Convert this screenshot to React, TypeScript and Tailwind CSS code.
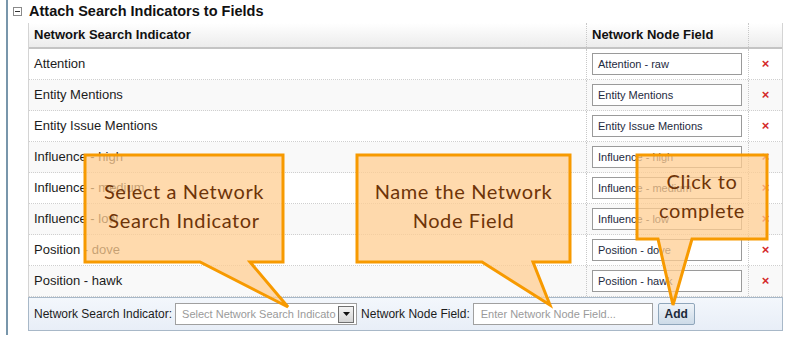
const ROWS = [
  ['Attention', 'Attention - raw'],
  ['Entity Mentions', 'Entity Mentions'],
  ['Entity Issue Mentions', 'Entity Issue Mentions'],
  ['Influence - high', 'Influence - high'],
  ['Influence - medium', 'Influence - medium'],
  ['Influence - low', 'Influence - low'],
  ['Position - dove', 'Position - dove'],
  ['Position - hawk', 'Position - hawk'],
]

const CALLOUTS = [
  { d: 'M85,155 H283 V262 H250 L288,307 L200,262 H85 Z', lines: ['Select a Network', 'Search Indicator'], box: 'left-[85px] top-[177px] w-[198px]' },
  { d: 'M357,155 H570 V262 H533 L550,305 L482,262 H357 Z', lines: ['Name the Network', 'Node Field'], box: 'left-[357px] top-[177px] w-[213px]' },
  { d: 'M637,155 H767 V239 H692 L673,305 L658,239 H637 Z', lines: ['Click to', 'complete'], box: 'left-[637px] top-[167px] w-[130px]' },
]

function Callouts() {
  return (
    <>
      <svg className="pointer-events-none absolute left-0 top-0" width="785" height="341">
        {CALLOUTS.map((c, i) => (
          <path key={i} d={c.d} fill="rgba(255,205,145,0.74)" stroke="#f79a00" strokeWidth="3" strokeLinejoin="miter" />
        ))}
      </svg>
      {CALLOUTS.map((c, i) => (
        <div
          key={i}
          className={`absolute ${c.box} text-center text-[20px] leading-[29px] tracking-[0.6px] text-[#6e3408] [font-family:Lato,'Open_Sans',sans-serif]`}
        >
          {c.lines.map(l => <div key={l}>{l}</div>)}
        </div>
      ))}
    </>
  )
}

export default function App() {
  return (
    <div className="relative h-[341px] w-[785px] overflow-hidden bg-white text-[#1c1c1c] [font-family:'Liberation_Sans',Arial,sans-serif]">
      <div className="ml-[6px] h-[335px] border-l-2 border-[#7896ab] pl-[5px]">
        {/* Section title */}
        <div className="flex h-[23px] items-center gap-[7px]">
          <div className="flex h-[9px] w-[9px] items-center justify-center border border-[#8a8a8a] bg-white">
            <div className="h-px w-[5px] bg-[#333]" />
          </div>
          <h1 className="text-[14.5px] font-bold leading-none text-[#111]">Attach Search Indicators to Fields</h1>
        </div>

        {/* Table */}
        <div className="ml-[15px] w-[755px]">
          <div className="border-x border-[#d4d4d4]">
            <div className="grid h-[26px] grid-cols-[558px_162px_1fr] border-b-2 border-[#c4c4c4] bg-gradient-to-b from-white to-[#ececec] text-[13px] font-bold text-[#111]">
              <div className="flex items-center border-r border-dotted border-[#c8c8c8] pl-[5px]">Network Search Indicator</div>
              <div className="flex items-center border-r border-dotted border-[#c8c8c8] pl-[5px]">Network Node Field</div>
              <div />
            </div>
            {ROWS.map(([name, field], i) => (
              <div
                key={name}
                className={`grid h-[31px] grid-cols-[558px_162px_1fr] border-b border-dotted border-[#cfcfcf] text-[13px] ${i % 2 ? 'bg-[#f9f9f9]' : 'bg-white'}`}
              >
                <div className="flex items-center border-r border-dotted border-[#c8c8c8] pl-[5px]">{name}</div>
                <div className="flex items-center border-r border-dotted border-[#c8c8c8] pl-[5px]">
                  <div className="flex h-[22px] w-[150px] items-center border border-[#9a9a9a] bg-white pl-[5px] text-[11px] text-[#1e2a40]">
                    {field}
                  </div>
                </div>
                <div className="flex items-center justify-center text-[13px] font-bold text-[#d42a2a]">×</div>
              </div>
            ))}
          </div>

          {/* Add bar */}
          <div className="flex h-[34px] items-center border border-[#a8b8c8] bg-gradient-to-b from-[#f3f7fc] to-[#e8eef7] pl-[5px] text-[12px] text-[#1c1c1c]">
            <span>Network Search Indicator:</span>
            <div className="ml-[3px] flex h-[22px] w-[182px] items-center justify-between border border-[#a0a0a0] bg-white pl-[6px] pr-[2px]">
              <span className="text-[11px] text-[#9a9a9a]">Select Network Search Indicato</span>
              <div className="flex h-[17px] w-[16px] items-center justify-center border border-[#707070] bg-gradient-to-b from-[#f4f4f4] to-[#d4d4d4]">
                <svg width="7" height="4" viewBox="0 0 7 4"><path d="M0,0 H7 L3.5,4 Z" fill="#111" /></svg>
              </div>
            </div>
            <span className="ml-[4px]">Network Node Field:</span>
            <div className="ml-[3px] flex h-[22px] w-[180px] items-center border border-[#a0a0a0] bg-white pl-[7px] text-[11px] text-[#9a9a9a]">
              Enter Network Node Field...
            </div>
            <button className="ml-[5px] h-[22px] w-[37px] rounded-[2px] border border-[#8fa6bb] bg-gradient-to-b from-[#eef3f8] to-[#cddbe8] text-[12px] font-bold text-[#1c2a3a]">
              Add
            </button>
          </div>
        </div>
      </div>
      <Callouts />
    </div>
  )
}
